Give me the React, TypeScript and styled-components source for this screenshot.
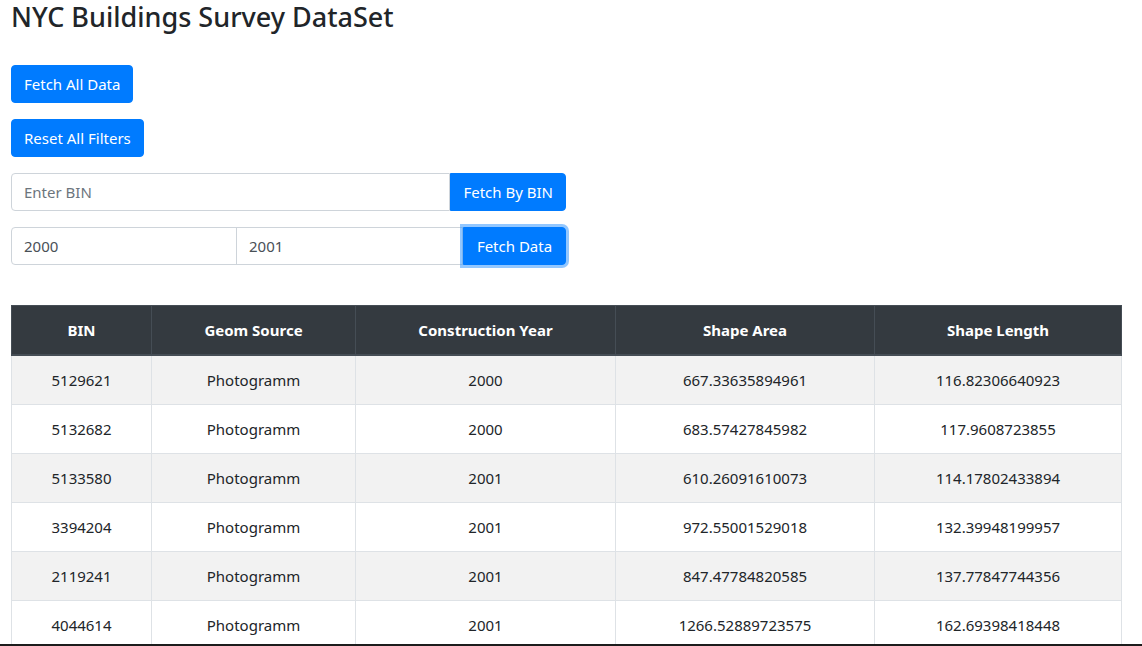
import React from "react";
import styled, { createGlobalStyle } from "styled-components";

const Global = createGlobalStyle`
  html, body { margin: 0; padding: 0; background: #fff; }
  body {
    font-family: "Segoe UI", "Noto Sans", "Open Sans", sans-serif;
    font-size: 16px;
    line-height: 1.5;
    color: #212529;
  }
  * { box-sizing: border-box; }
`;

const Page = styled.div`
  padding: 0 11px 0 11px;
`;

const Title = styled.h3`
  margin: 0;
  padding-top: 1px;
  font-size: 27px;
  font-weight: 500;
  line-height: 1.2;
  height: 42px;
`;

const Stack = styled.div`
  display: flex;
  flex-direction: column;
  align-items: flex-start;
  gap: 16px;
  margin-top: 23px;
`;

const Button = styled.button<{ $focus?: boolean; $joined?: boolean }>`
  font-family: inherit;
  font-size: 15px;
  line-height: 24px;
  height: 38px;
  padding: 6px 12px;
  color: #fff;
  background: #007bff;
  border: 1px solid #007bff;
  border-radius: ${(p) => (p.$joined ? "0 4px 4px 0" : "4px")};
  cursor: pointer;
  white-space: nowrap;
  box-shadow: ${(p) => (p.$focus ? "0 0 0 3px rgba(38,143,255,.5)" : "none")};
  position: relative;
  z-index: ${(p) => (p.$focus ? 2 : 0)};
`;

const Group = styled.div<{ $width: number }>`
  display: flex;
  width: ${(p) => p.$width}px;
  height: 38px;
`;

const Input = styled.input<{ $first?: boolean; $w?: number }>`
  font-family: inherit;
  font-size: 15px;
  height: 38px;
  padding: 6px 12px;
  color: #495057;
  border: 1px solid #ced4da;
  border-radius: ${(p) => (p.$first ? "4px 0 0 4px" : "0")};
  margin-left: ${(p) => (p.$first ? "0" : "-1px")};
  width: ${(p) => (p.$w ? `${p.$w}px` : "auto")};
  flex: ${(p) => (p.$w ? "none" : "1")};
  min-width: 0;
  outline: none;
  &::placeholder { color: #6c757d; }
`;

const Table = styled.table`
  margin-top: 40px;
  width: 1110px;
  border-collapse: collapse;
  table-layout: fixed;
  font-size: 15px;
`;

const Th = styled.th<{ $w: number }>`
  width: ${(p) => p.$w}px;
  background: #343a40;
  color: #fff;
  font-weight: 700;
  text-align: center;
  padding: 12px;
  line-height: 24px;
  border: 1px solid #454d55;
  border-bottom: 2px solid #454d55;
`;

const Tr = styled.tr<{ $odd: boolean }>`
  background: ${(p) => (p.$odd ? "#f2f2f2" : "#fff")};
`;

const Td = styled.td`
  text-align: center;
  padding: 12px;
  line-height: 24px;
  border: 1px solid #dee2e6;
`;

const TaskEdge = styled.div`
  position: fixed;
  left: 0;
  right: 0;
  bottom: 0;
  height: 2px;
  background: #1c1c1c;
`;

const cols = [
  { label: "BIN", w: 140 },
  { label: "Geom Source", w: 204 },
  { label: "Construction Year", w: 260 },
  { label: "Shape Area", w: 259 },
  { label: "Shape Length", w: 247 },
];

const rows = [
  ["5129621", "Photogramm", "2000", "667.33635894961", "116.82306640923"],
  ["5132682", "Photogramm", "2000", "683.57427845982", "117.9608723855"],
  ["5133580", "Photogramm", "2001", "610.26091610073", "114.17802433894"],
  ["3394204", "Photogramm", "2001", "972.55001529018", "132.39948199957"],
  ["2119241", "Photogramm", "2001", "847.47784820585", "137.77847744356"],
  ["4044614", "Photogramm", "2001", "1266.52889723575", "162.69398418448"],
];

export default function App() {
  return (
    <>
      <Global />
      <Page>
        <Title>NYC Buildings Survey DataSet</Title>
        <Stack>
          <Button>Fetch All Data</Button>
          <Button>Reset All Filters</Button>
          <Group $width={555}>
            <Input $first placeholder="Enter BIN" />
            <Button $joined>Fetch By BIN</Button>
          </Group>
          <Group $width={555}>
            <Input $first $w={226} defaultValue="2000" />
            <Input $w={227} defaultValue="2001" />
            <Button $joined $focus style={{ flex: 1 }}>
              Fetch Data
            </Button>
          </Group>
        </Stack>
        <Table>
          <thead>
            <tr>
              {cols.map((c) => (
                <Th key={c.label} $w={c.w}>
                  {c.label}
                </Th>
              ))}
            </tr>
          </thead>
          <tbody>
            {rows.map((r, i) => (
              <Tr key={r[0]} $odd={i % 2 === 0}>
                {r.map((v, j) => (
                  <Td key={j}>{v}</Td>
                ))}
              </Tr>
            ))}
          </tbody>
        </Table>
      </Page>
      <TaskEdge />
    </>
  );
}
